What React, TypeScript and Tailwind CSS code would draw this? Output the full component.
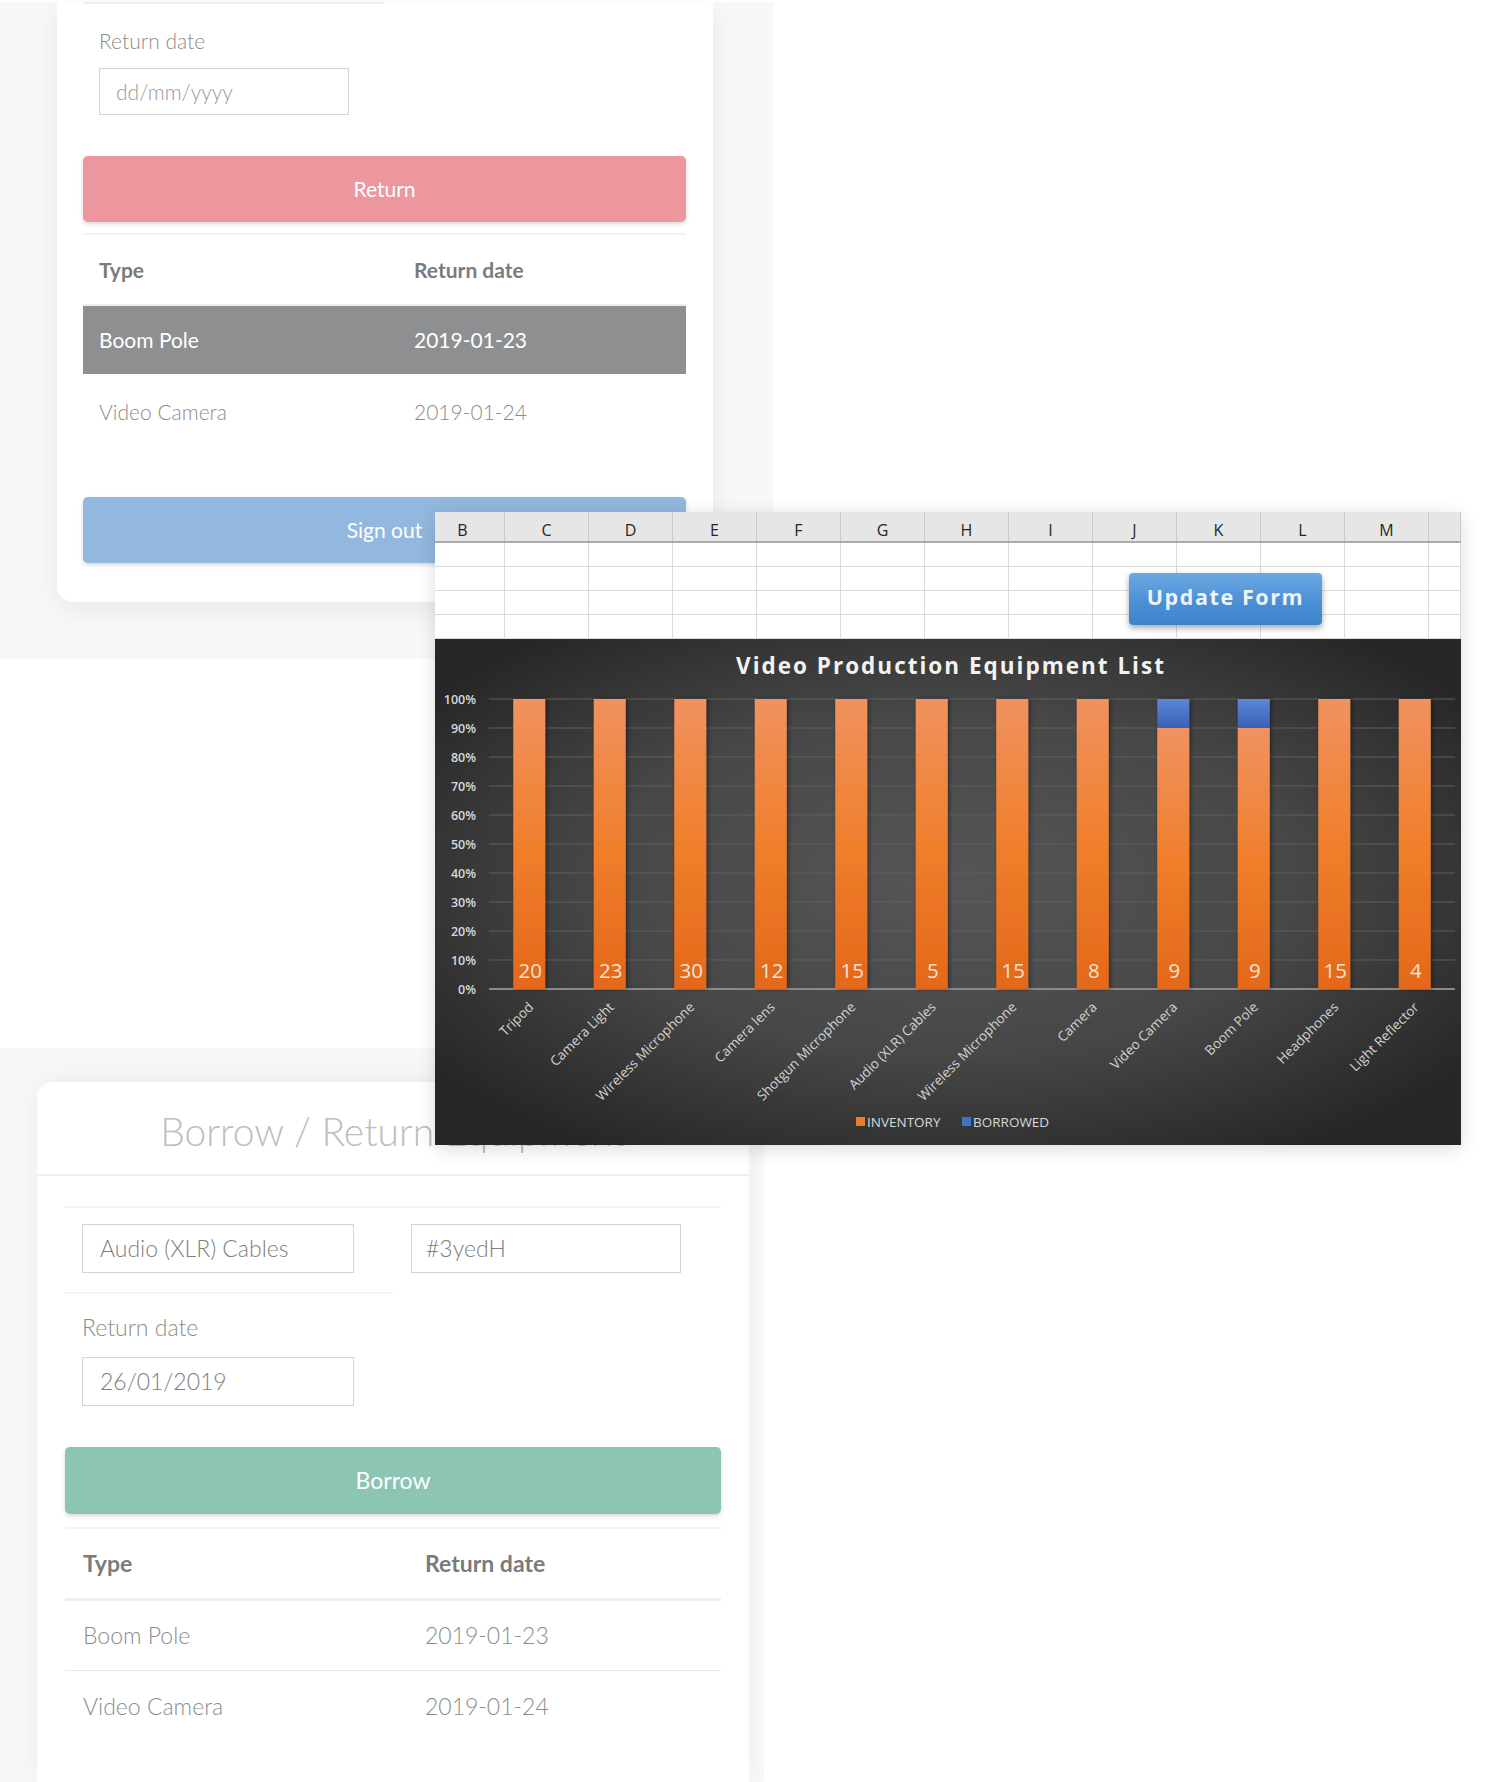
import React from "react";

const sheetCols = [
  { l: "B", w: "w-[70px] pr-[14px]" },
  { l: "C", w: "w-[84px]" },
  { l: "D", w: "w-[84px]" },
  { l: "E", w: "w-[84px]" },
  { l: "F", w: "w-[84px]" },
  { l: "G", w: "w-[84px]" },
  { l: "H", w: "w-[84px]" },
  { l: "I", w: "w-[84px]" },
  { l: "J", w: "w-[84px]" },
  { l: "K", w: "w-[84px]" },
  { l: "L", w: "w-[84px]" },
  { l: "M", w: "w-[84px]" },
  { l: "", w: "w-[32px]" },
];

const equipment = [
  { name: "Tripod", qty: 20, borrowed: false },
  { name: "Camera Light", qty: 23, borrowed: false },
  { name: "Wireless Microphone", qty: 30, borrowed: false },
  { name: "Camera lens", qty: 12, borrowed: false },
  { name: "Shotgun Microphone", qty: 15, borrowed: false },
  { name: "Audio (XLR) Cables", qty: 5, borrowed: false },
  { name: "Wireless Microphone", qty: 15, borrowed: false },
  { name: "Camera", qty: 8, borrowed: false },
  { name: "Video Camera", qty: 9, borrowed: true },
  { name: "Boom Pole", qty: 9, borrowed: true },
  { name: "Headphones", qty: 15, borrowed: false },
  { name: "Light Reflector", qty: 4, borrowed: false },
];

function EquipmentChart() {
  const W = 1026;
  const H = 506;
  const left = 54;
  const right = 1020;
  const top = 60;
  const base = 350;
  const step = 29;
  const cw = (right - left) / equipment.length;
  const barW = 32;

  return (
    <svg width={W} height={H} className="block">
      <defs>
        <radialGradient id="chartBg" cx="50%" cy="48%" r="62%">
          <stop offset="0%" stopColor="#565656" />
          <stop offset="55%" stopColor="#474747" />
          <stop offset="100%" stopColor="#272727" />
        </radialGradient>
        <linearGradient id="barOrange" x1="0" y1="0" x2="0" y2="1">
          <stop offset="0" stopColor="#f0925f" />
          <stop offset="0.5" stopColor="#f07f2c" />
          <stop offset="1" stopColor="#e3681a" />
        </linearGradient>
        <linearGradient id="barBlue" x1="0" y1="0" x2="0" y2="1">
          <stop offset="0" stopColor="#5b87d6" />
          <stop offset="1" stopColor="#3862b6" />
        </linearGradient>
        <filter id="barShadow" x="-40%" y="-5%" width="180%" height="110%">
          <feDropShadow dx="1.5" dy="0" stdDeviation="2" floodColor="#000" floodOpacity="0.45" />
        </filter>
      </defs>
      <rect width={W} height={H} fill="url(#chartBg)" />

      <text
        x={516}
        y={35}
        textAnchor="middle"
        fontFamily="'Open Sans', sans-serif"
        fontWeight={700}
        fontSize={22.5}
        letterSpacing={2}
        fill="#f2f2f2"
      >
        Video Production Equipment List
      </text>

      {Array.from({ length: 11 }).map((_, k) => {
        const y = top + k * step;
        return (
          <g key={k}>
            <line
              x1={left}
              x2={right}
              y1={y}
              y2={y}
              stroke={k === 10 ? "#8a8a8a" : "#5e5e5e"}
              strokeWidth={k === 10 ? 2 : 1}
            />
            <text
              x={41}
              y={y + 4.5}
              textAnchor="end"
              fontFamily="'Open Sans', sans-serif"
              fontWeight={600}
              fontSize={12.5}
              fill="#d9d9d9"
            >
              {100 - k * 10}%
            </text>
          </g>
        );
      })}

      {equipment.map((e, i) => {
        const cx = left + cw / 2 + cw * i;
        const split = e.borrowed ? top + step : top;
        return (
          <g key={i}>
            <g filter="url(#barShadow)">
              {e.borrowed && (
                <rect x={cx - barW / 2} y={top} width={barW} height={split - top} fill="url(#barBlue)" />
              )}
              <rect x={cx - barW / 2} y={split} width={barW} height={base - split} fill="url(#barOrange)" />
            </g>
            <text
              x={cx + 1}
              y={339}
              textAnchor="middle"
              fontFamily="'Open Sans', sans-serif"
              fontSize={20.5}
              fill="#f6e3d6"
            >
              {e.qty}
            </text>
            <text
              transform={`translate(${cx + 5},${369}) rotate(-45)`}
              textAnchor="end"
              fontFamily="'Open Sans', sans-serif"
              fontSize={13.5}
              fill="#d2d2d2"
            >
              {e.name}
            </text>
          </g>
        );
      })}

      <rect x={421} y={478} width={9} height={9} fill="#ee7a2b" />
      <text x={432} y={487.5} fontFamily="'Open Sans', sans-serif" fontSize={13.5} fill="#d9d9d9">
        INVENTORY
      </text>
      <rect x={527} y={478} width={9} height={9} fill="#4472c4" />
      <text x={538} y={487.5} fontFamily="'Open Sans', sans-serif" fontSize={13.5} fill="#d9d9d9">
        BORROWED
      </text>
    </svg>
  );
}

function SpreadsheetShot() {
  return (
    <div className="absolute left-[435px] top-[512px] w-[1026px] bg-white shadow-[0_4px_18px_rgba(0,0,0,0.14)]">
      <div className="flex h-[31px] bg-[#e6e6e6] border-b-2 border-[#ababab]">
        {sheetCols.map((c, i) => (
          <div
            key={i}
            className={`${c.w} shrink-0 flex items-center justify-center border-r border-[#c9c9c9] text-[16px] text-[#262626] font-['Open_Sans',sans-serif] pt-[6px]`}
          >
            {c.l}
          </div>
        ))}
      </div>
      {[0, 1, 2, 3].map((r) => (
        <div key={r} className="flex h-[24px]">
          {sheetCols.map((c, i) => (
            <div key={i} className={`${c.w} shrink-0 border-r border-b border-[#dadada]`} />
          ))}
        </div>
      ))}
      <div className="absolute left-[694px] top-[61px] w-[193px] h-[52px] rounded-[4px] bg-[linear-gradient(180deg,#6ca8e2_0%,#4b90d6_55%,#3d84cc_100%)] shadow-[0_3px_6px_rgba(0,0,0,0.35)] flex items-center justify-center pb-[3px] text-[21.5px] font-bold tracking-[1.6px] text-[#edf3f9] font-['Open_Sans',sans-serif]">
        Update Form
      </div>
      <EquipmentChart />
    </div>
  );
}

function InputBox({ text, placeholder, className }: { text?: string; placeholder?: string; className: string }) {
  return (
    <div className={`flex items-center border border-[#d4d4d4] bg-white font-light ${className}`}>
      <span className={placeholder ? "text-[#999999]" : "text-[#7e7e7e]"}>{text ?? placeholder}</span>
    </div>
  );
}

function TopCard() {
  return (
    <div className="w-[773px] h-[657px] bg-[#f8f8f8]">
      <div className="ml-[57px] w-[656px] h-[600px] bg-white rounded-b-[16px] shadow-[0_8px_28px_rgba(0,0,0,0.07)] pl-[26px] pr-[27px] text-[21px]">
        <div className="mt-[2px] w-[301px] h-[2px] bg-[#f0f0f0]" />
        <div className="mt-[24px] pl-[16px] h-[25px] leading-[25px] font-light text-[#8c8c8c]">Return date</div>
        <InputBox placeholder="dd/mm/yyyy" className="ml-[16px] mt-[15px] w-[250px] h-[47px] pl-[16px]" />
        <div className="mt-[41px] h-[66px] rounded-[5px] bg-[#ec979e] shadow-[0_2px_4px_rgba(0,0,0,0.16)] flex items-center justify-center text-white">
          Return
        </div>
        <div className="mt-[11px] h-[2px] bg-[#f2f2f2]" />
        <div className="flex h-[71px] items-center border-b-2 border-[#eeeeee] font-bold text-[#7b7b7b]">
          <div className="w-[331px] pl-[16px]">Type</div>
          <div>Return date</div>
        </div>
        <div className="flex h-[68px] items-center bg-[#8e8f91] text-white">
          <div className="w-[331px] pl-[16px]">Boom Pole</div>
          <div>2019-01-23</div>
        </div>
        <div className="flex h-[76px] items-center font-light text-[#8c8c8c]">
          <div className="w-[331px] pl-[16px]">Video Camera</div>
          <div>2019-01-24</div>
        </div>
        <div className="mt-[47px] h-[66px] rounded-[5px] bg-[#92b8df] shadow-[0_2px_4px_rgba(0,0,0,0.16)] flex items-center justify-center text-white">
          Sign out
        </div>
      </div>
    </div>
  );
}

function BottomCard() {
  return (
    <div className="w-[764px] h-[736px] bg-[#f8f8f8] pt-[34px]">
      <div className="ml-[37px] w-[712px] h-[702px] bg-white rounded-t-[16px] shadow-[0_-4px_24px_rgba(0,0,0,0.05)] text-[23px]">
        <div className="h-[94px] pt-[6px] flex items-center justify-center border-b-2 border-[#f0f0f0] text-[39px] text-[#bdbdbd] font-light">
          Borrow / Return Equipment
        </div>
        <div className="px-[28px]">
          <div className="mt-[30px] h-[2px] bg-[#f2f4f5]" />
          <div className="mt-[16px] flex">
            <InputBox text="Audio (XLR) Cables" className="ml-[17px] w-[272px] h-[49px] pl-[17px]" />
            <InputBox text="#3yedH" className="ml-[57px] w-[270px] h-[49px] pl-[14px]" />
          </div>
          <div className="mt-[19px] w-[328px] h-[2px] bg-[#f2f4f5]" />
          <div className="mt-[20px] pl-[17px] h-[27px] leading-[27px] font-light text-[#8c8c8c]">Return date</div>
          <InputBox text="26/01/2019" className="ml-[17px] mt-[16px] w-[272px] h-[49px] pl-[17px]" />
          <div className="mt-[41px] h-[67px] rounded-[5px] bg-[#8dc5b5] shadow-[0_2px_4px_rgba(0,0,0,0.16)] flex items-center justify-center text-white">
            Borrow
          </div>
          <div className="mt-[13px] h-[2px] bg-[#f2f4f5]" />
          <div className="flex h-[72px] items-center border-b-[3px] border-[#eeeeee] font-bold text-[#7b7b7b]">
            <div className="w-[360px] pl-[18px]">Type</div>
            <div>Return date</div>
          </div>
          <div className="flex h-[70px] items-center border-b border-[#e7ebee] font-light text-[#8c8c8c]">
            <div className="w-[360px] pl-[18px]">Boom Pole</div>
            <div>2019-01-23</div>
          </div>
          <div className="flex h-[70px] items-center font-light text-[#8c8c8c]">
            <div className="w-[360px] pl-[18px]">Video Camera</div>
            <div>2019-01-24</div>
          </div>
        </div>
      </div>
    </div>
  );
}

export default function App() {
  return (
    <div className="relative w-[1488px] h-[1782px] overflow-hidden bg-white font-['Lato',sans-serif]">
      <TopCard />
      <div className="h-[389px]" />
      <BottomCard />
      <SpreadsheetShot />
    </div>
  );
}
